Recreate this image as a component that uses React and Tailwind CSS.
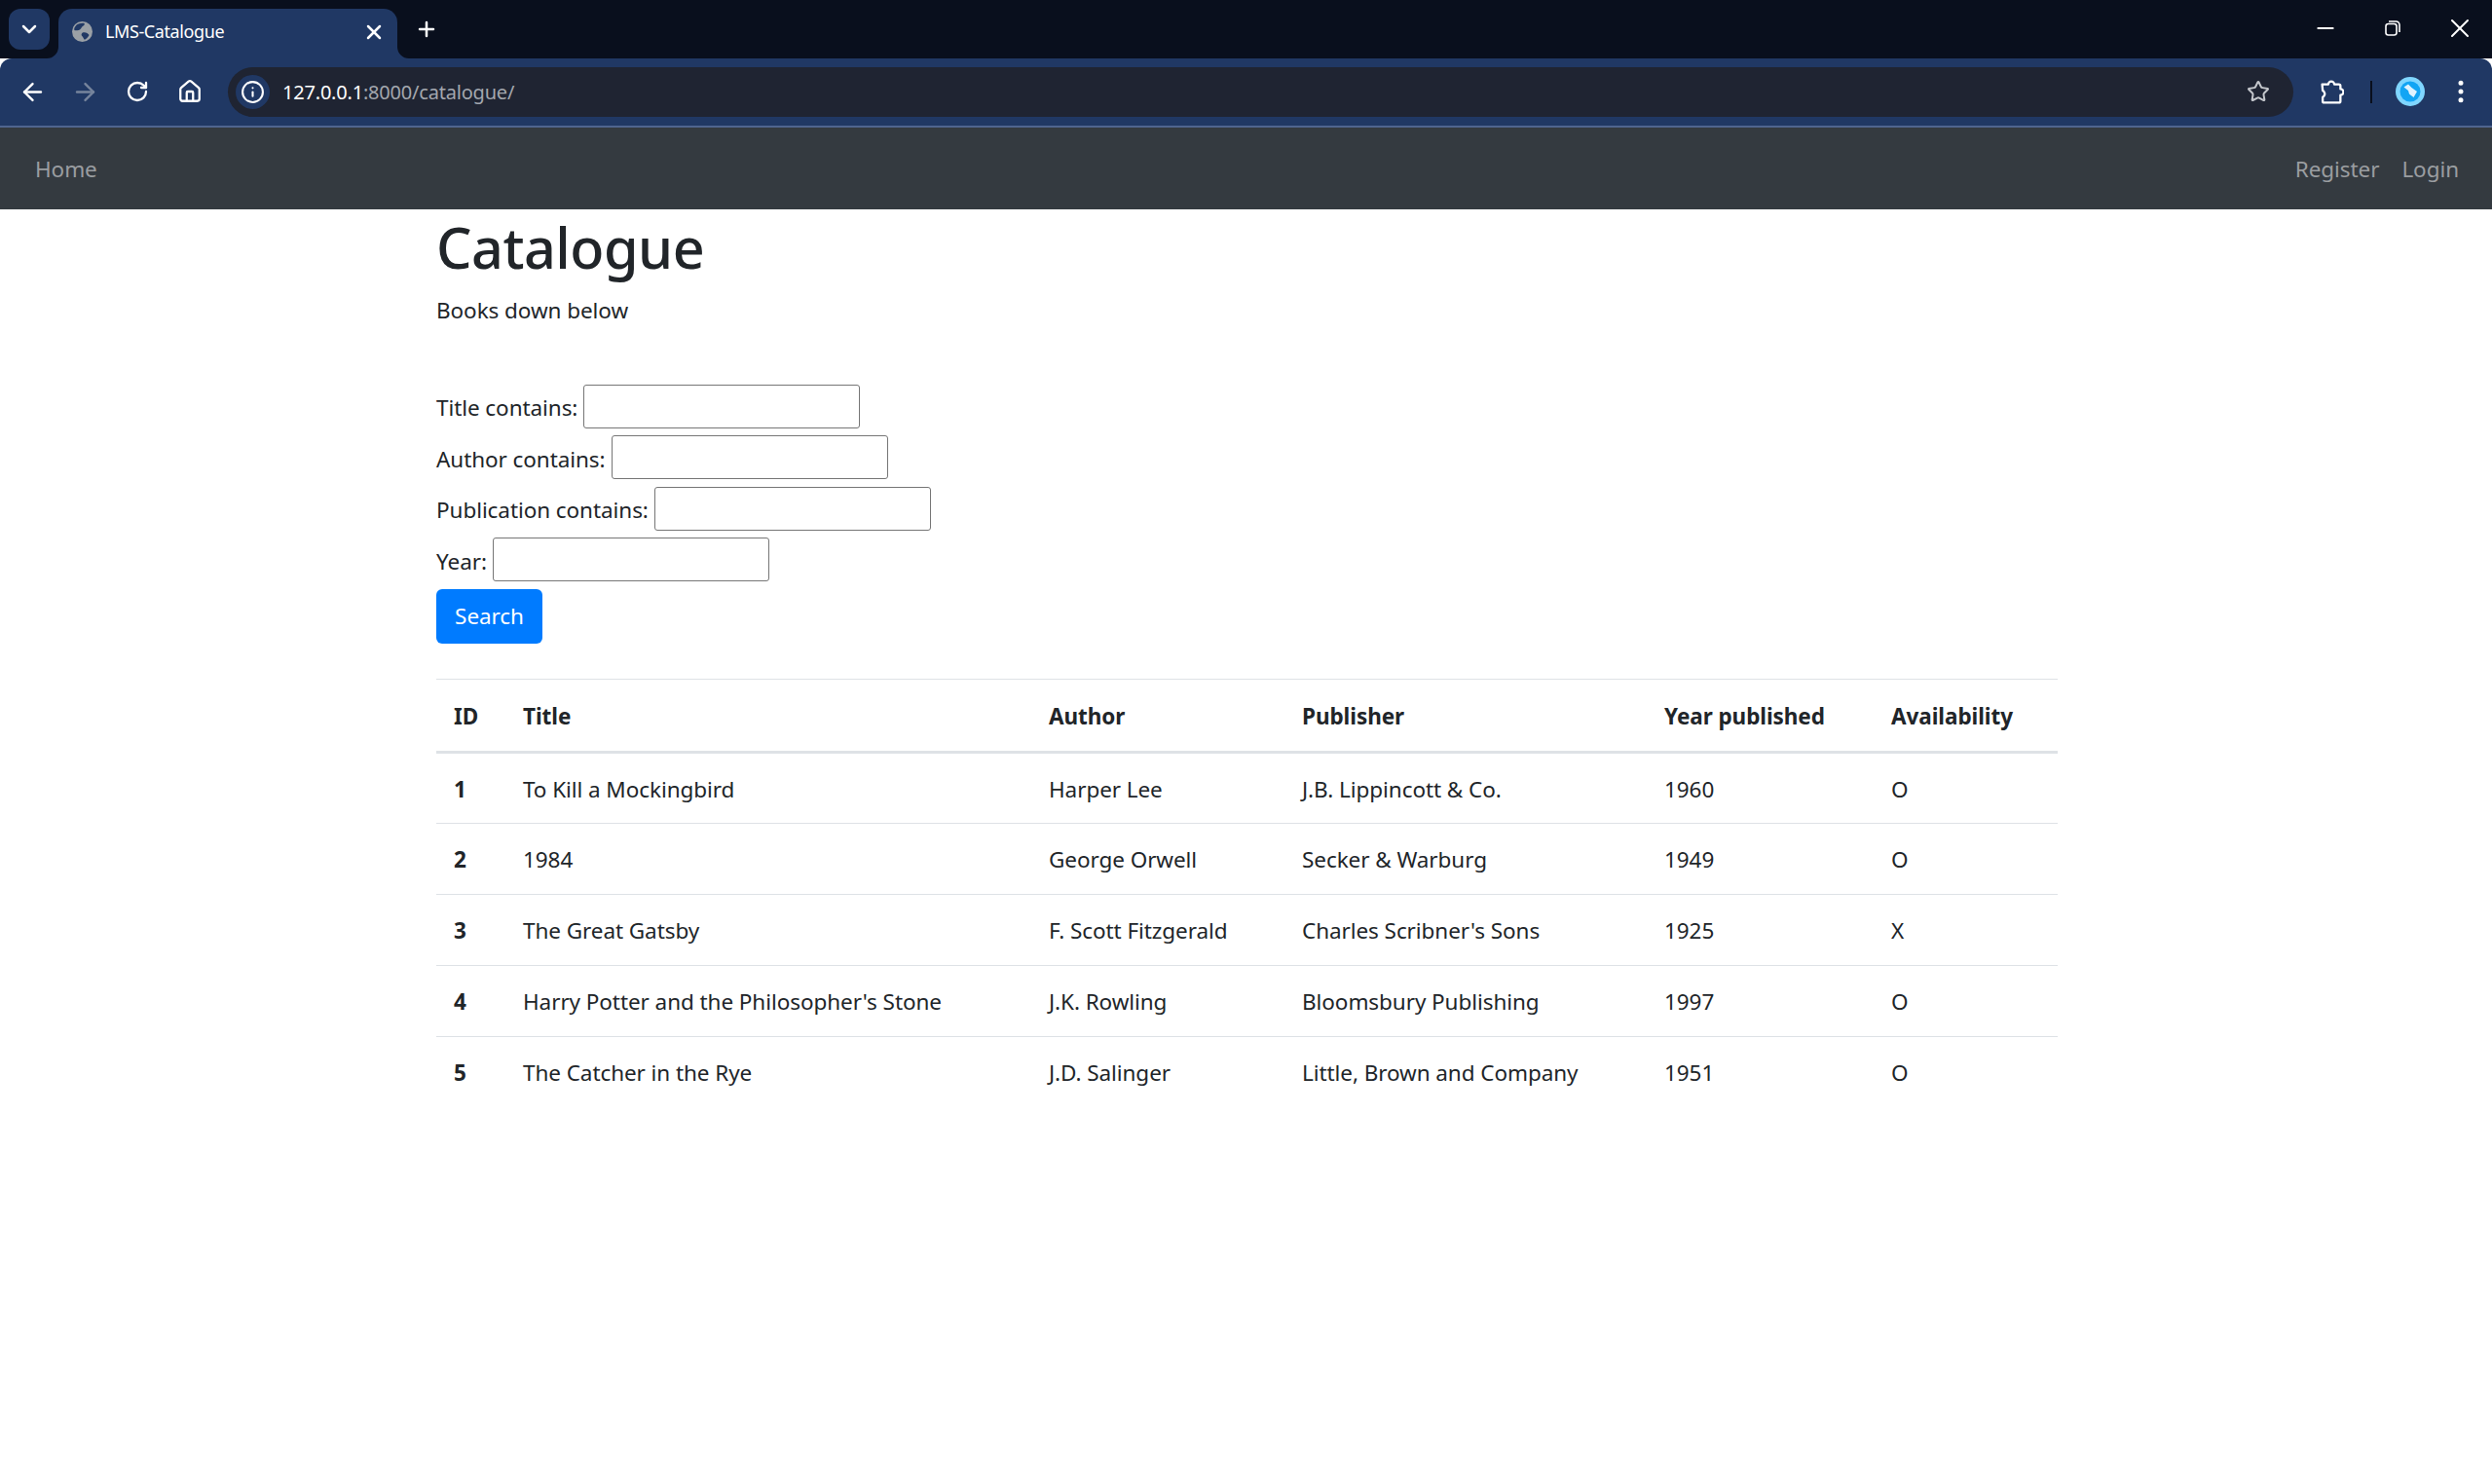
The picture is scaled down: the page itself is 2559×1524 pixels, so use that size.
import React from 'react';
import { ArrowLeft, ArrowRight, RotateCw, Home, Info, Star, MoreVertical, Minus, X, Plus, ChevronDown } from 'lucide-react';

const books = [
  { id: 1, title: 'To Kill a Mockingbird', author: 'Harper Lee', publisher: 'J.B. Lippincott & Co.', year: 1960, available: 'O' },
  { id: 2, title: '1984', author: 'George Orwell', publisher: 'Secker & Warburg', year: 1949, available: 'O' },
  { id: 3, title: 'The Great Gatsby', author: 'F. Scott Fitzgerald', publisher: "Charles Scribner's Sons", year: 1925, available: 'X' },
  { id: 4, title: "Harry Potter and the Philosopher's Stone", author: 'J.K. Rowling', publisher: 'Bloomsbury Publishing', year: 1997, available: 'O' },
  { id: 5, title: 'The Catcher in the Rye', author: 'J.D. Salinger', publisher: 'Little, Brown and Company', year: 1951, available: 'O' },
];

const filters = ['Title contains:', 'Author contains:', 'Publication contains:', 'Year:'];

function ToolButton({ children }) {
  return <div className="w-[54px] h-11 flex items-center justify-center text-white">{children}</div>;
}

function BrowserChrome() {
  return (
    <div className="font-['Noto_Sans',sans-serif]">
      {/* Tab strip */}
      <div className="h-[60px] bg-[#090f1d] flex items-end pl-[9px]">
        <div className="w-[42px] h-[42px] mb-[9px] rounded-xl bg-[#203864] flex items-center justify-center text-white">
          <ChevronDown size={24} strokeWidth={2.5} />
        </div>
        <div className="relative ml-[9px] w-[348px] h-[51px] bg-[#203864] rounded-t-[14px] flex items-center pl-[14px] pr-[12px] pb-1 text-white">
          <svg className="absolute -left-3 bottom-0" width="12" height="12" viewBox="0 0 12 12"><path d="M12 0v12H0a12 12 0 0 0 12-12z" fill="#203864" /></svg>
          <svg className="absolute -right-3 bottom-0" width="12" height="12" viewBox="0 0 12 12"><path d="M0 0v12h12A12 12 0 0 1 0 0z" fill="#203864" /></svg>
          <svg width="21" height="21" viewBox="0 0 18 18">
            <circle cx="9" cy="9" r="9" fill="#9aa0a6" />
            <path d="M4 3c2-1 5-2 7-1 0 2-2 2-3 4S5 8 3 8 2 5 4 3zM9 10c2-1 5 0 6 2-1 2-3 4-4 4-1-1-1-2-2-3s-1-2 0-3z" fill="#203864" />
          </svg>
          <span className="ml-[13px] text-[18px] tracking-[-0.4px] flex-1">LMS-Catalogue</span>
          <X size={24} strokeWidth={2.5} />
        </div>
        <div className="ml-[18px] mb-[9px] h-[42px] flex items-center text-white">
          <Plus size={24} strokeWidth={2.5} />
        </div>
        <div className="ml-auto h-full flex items-center pb-[2px] text-white">
          <div className="w-[69px] flex justify-center"><Minus size={26} strokeWidth={2} /></div>
          <div className="w-[70px] flex justify-center">
            <svg width="16" height="16" viewBox="0 0 16 16" fill="none" stroke="currentColor" strokeWidth="1.6">
              <rect x="1" y="3.5" width="11" height="11.5" rx="2.5" />
              <path d="M4 1h7.5A3.5 3.5 0 0 1 15 4.5V12" />
            </svg>
          </div>
          <div className="w-[67px] flex justify-center"><X size={32} strokeWidth={1.5} /></div>
        </div>
      </div>

      {/* Toolbar */}
      <div className="h-[69px] bg-[#203864] rounded-t-xl flex items-center pl-[6px] pr-[17px] pb-[1px]">
        <ToolButton><ArrowLeft size={29} strokeWidth={2} /></ToolButton>
        <ToolButton><ArrowRight size={29} strokeWidth={2} className="text-[#76849c]" /></ToolButton>
        <ToolButton><RotateCw size={24} strokeWidth={2.3} /></ToolButton>
        <ToolButton><Home size={26} strokeWidth={2.1} /></ToolButton>
        <div className="ml-[12px] flex-1 h-[51px] rounded-full bg-[#1f2432] flex items-center pl-[8px] pr-[24px]">
          <div className="w-[35px] h-[35px] rounded-full bg-[#203864] flex items-center justify-center text-white">
            <Info size={25} strokeWidth={2} />
          </div>
          <div className="ml-[13px] flex-1 pt-[1px] text-[20px] tracking-[-0.2px] text-[#a3a7ae]">
            <span className="text-white">127.0.0.1</span>:8000/catalogue/
          </div>
          <Star size={24} strokeWidth={2} className="text-[#c4c7cc]" />
        </div>
        <div className="ml-[17px] w-11 flex justify-center text-white">
          <svg width="25" height="25" viewBox="0 0 24 24" fill="none" stroke="currentColor" strokeWidth="2.2" strokeLinejoin="round">
            <path d="M2.5 4.5H8.5a3 3 0 0 1 6 0H19a1.5 1.5 0 0 1 1.5 1.5V9a3 3 0 0 1 0 6v6a1.5 1.5 0 0 1-1.5 1.5H4.5A1.5 1.5 0 0 1 3 21v-4a3.5 3.5 0 0 0 1.5-5A4 4 0 0 0 3 10.5z" />
          </svg>
        </div>
        <div className="ml-[18px] w-[2px] h-[23px] bg-[#090f1d]" />
        <div className="ml-[24px] w-[30px] h-[30px] rounded-full">
          <svg width="30" height="30" viewBox="0 0 30 30">
            <circle cx="15" cy="15" r="15" fill="#7fd6ff" />
            <circle cx="15" cy="15" r="10.5" fill="#12a5f4" />
            <path d="M8.5 10.5l4.5-3 3.5 3.5 5.5 4-3.5 6-4.5-3.5-1-3.5z" fill="#dff3ff" />
          </svg>
        </div>
        <div className="ml-[22px] w-[30px] flex justify-center text-white">
          <MoreVertical size={30} strokeWidth={2} />
        </div>
      </div>
      <div className="h-[2px] bg-[#4f658f]" />
    </div>
  );
}

export default function App() {
  return (
    <div className="min-h-[1524px] bg-white font-['Noto_Sans',sans-serif] text-[#212529] text-[22.5px] tracking-[-0.07px]">
      <BrowserChrome />

      <nav className="h-[84px] bg-[#343a40] flex items-center justify-between pl-[36px] pr-[34px] pt-[1px] text-[#9a9da0]">
        <a>Home</a>
        <div className="flex gap-[23px]">
          <a>Register</a>
          <a>Login</a>
        </div>
      </nav>

      <main className="w-[1665px] ml-[448px]">
        <h1 className="text-[57.5px] leading-[72px] font-medium tracking-[-0.5px] mt-[3px]">Catalogue</h1>
        <p className="mt-[10.5px] leading-[36px]">Books down below</p>

        <form className="mt-[58px]">
          {filters.map((label) => (
            <div key={label} className="flex items-center h-[45px] mb-[7.5px]">
              <label className="pt-1">{label}</label>
              <input className="ml-[6px] w-[284px] h-[45px] border border-[#767676] rounded-[3px] bg-white" />
            </div>
          ))}
          <button type="button" className="w-[109px] h-[56px] pt-[1px] bg-[#007bff] text-white rounded-[6px]">Search</button>
        </form>

        <table className="mt-[36px] w-full border-collapse table-fixed">
          <colgroup>
            <col className="w-[71px]" />
            <col className="w-[540px]" />
            <col className="w-[260px]" />
            <col className="w-[372px]" />
            <col className="w-[233px]" />
            <col />
          </colgroup>
          <thead>
            <tr className="border-t border-b-[3px] border-t-[#dee2e6] border-b-[#dee2e6] h-[75px]">
              {['ID', 'Title', 'Author', 'Publisher', 'Year published', 'Availability'].map((h) => (
                <th key={h} className="px-[18px] pt-[3px] text-left font-bold">{h}</th>
              ))}
            </tr>
          </thead>
          <tbody>
            {books.map((b, i) => (
              <tr key={b.id} className={`h-[73px] ${i < 4 ? 'border-b border-[#dee2e6]' : ''}`}>
                <td className="px-[18px] pt-[3px] font-bold">{b.id}</td>
                <td className="px-[18px] pt-[3px]">{b.title}</td>
                <td className="px-[18px] pt-[3px]">{b.author}</td>
                <td className="px-[18px] pt-[3px]">{b.publisher}</td>
                <td className="px-[18px] pt-[3px]">{b.year}</td>
                <td className="px-[18px] pt-[3px]">{b.available}</td>
              </tr>
            ))}
          </tbody>
        </table>
      </main>
    </div>
  );
}
